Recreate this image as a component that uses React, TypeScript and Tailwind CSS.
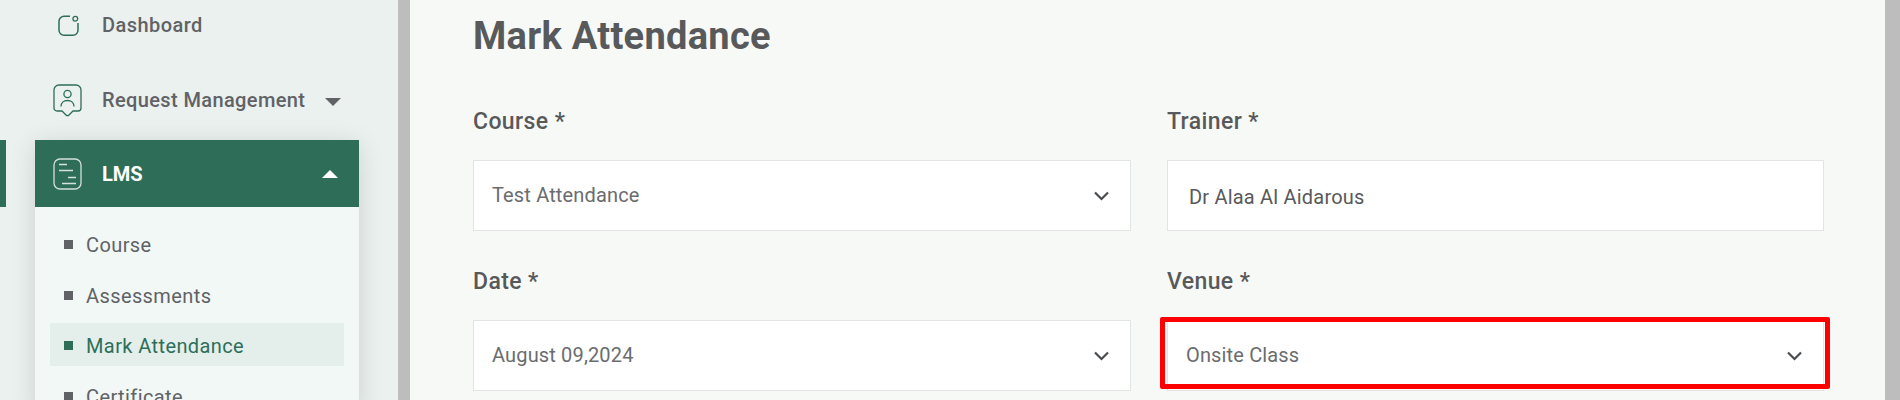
import React from "react";

const font = { fontFamily: "Roboto, sans-serif" };

function Chevron() {
  return (
    <svg width="15" height="10" viewBox="0 0 15 10" fill="none" className="shrink-0">
      <path d="M1 1.500 L7.500 8 L14 1.500" stroke="#4a4d4f" strokeWidth="2.200" />
    </svg>
  );
}

function Field({ label, children, className }: { label: string; children: React.ReactNode; className?: string }) {
  return (
    <div className={className}>
      <div className="h-[42px] mb-[18px] text-[23px] leading-[44px] font-medium text-[#58595b] tracking-[0.4px]">{label}</div>
      {children}
    </div>
  );
}

function SelectBox({ value }: { value: string }) {
  return (
    <div className="h-[71px] bg-white border border-[#e3e5e4] flex items-center justify-between pl-[18px] pr-[21px]">
      <span className="text-[20px] text-[#6a6c6e] tracking-[0.15px] pb-[2px]">{value}</span>
      <Chevron />
    </div>
  );
}

function SubItem({ label, active }: { label: string; active?: boolean }) {
  return (
    <div className={`flex items-center h-[43px] mx-[15px] pl-[14px] ${active ? "bg-[#e4eeea] pt-[2px]" : ""}`}>
      <span className={`w-[9px] h-[9px] mr-[13px] ${active ? "bg-[#2e6e59]" : "bg-[#616265]"}`} />
      <span className={`text-[20px] tracking-[0.4px] ${active ? "text-[#2e6e59]" : "text-[#616265]"}`}>{label}</span>
    </div>
  );
}

export default function App() {
  return (
    <div className="flex h-[400px] w-[1900px] overflow-hidden bg-[#f7f9f7]" style={font}>
      <aside className="w-[398px] shrink-0 bg-[#ebf1ef] flex flex-col">
        <div className="flex items-center h-[50px] shrink-0 pl-[58px]">
          <svg width="21" height="21" viewBox="0 0 21 21" fill="none" className="mr-[23px] shrink-0">
            <path d="M12 1.200H6a5 5 0 0 0-5 5v9a5 5 0 0 0 5 5h9a5 5 0 0 0 5-5V8" stroke="#2e6e59" strokeWidth="1.500" />
            <circle cx="17.300" cy="3.700" r="2.400" stroke="#2e6e59" strokeWidth="1.300" />
          </svg>
          <span className="text-[20px] font-medium text-[#616265] tracking-[0.45px]">Dashboard</span>
        </div>
        <div className="flex items-center h-[90px] shrink-0 pt-[10px] pl-[53px]">
          <svg width="29" height="33" viewBox="0 0 29 33" fill="none" className="mr-[20px] shrink-0">
            <path d="M6 1h17a5 5 0 0 1 5 5v18a3 3 0 0 1-3 3h-5l-4 4a2 2 0 0 1-3 0l-4-4H4a3 3 0 0 1-3-3V6a5 5 0 0 1 5-5Z" stroke="#2e6e59" strokeWidth="1.300" />
            <circle cx="14.500" cy="10" r="3.600" stroke="#2e6e59" strokeWidth="1.300" />
            <path d="M8 22.500c0-3.500 2.500-6 6.500-6s6.500 2.500 6.500 6" stroke="#2e6e59" strokeWidth="1.300" />
          </svg>
          <span className="text-[20px] font-medium text-[#616265] tracking-[0.38px]">Request Management</span>
          <span className="ml-[20px] mt-[3px] w-0 h-0 border-l-[8px] border-r-[8px] border-t-[8px] border-l-transparent border-r-transparent border-t-[#616265]" />
        </div>
        <div className="flex items-stretch shrink-0">
          <div className="w-[6px] h-[67px] bg-[#2e6e59] shrink-0" />
          <div className="w-[324px] ml-[29px] shadow-[0_4px_24px_rgba(0,0,0,0.13)] bg-[#f2f8f6]">
            <div className="h-[67px] bg-[#2e6e59] flex items-center pl-[18px] pr-[21px]">
              <svg width="29" height="32" viewBox="0 0 29 32" fill="none" className="mr-[20px] shrink-0">
                <rect x="1" y="1" width="27" height="30" rx="6" stroke="#d4e0dc" strokeWidth="1.300" />
                <path d="M6 6.500h8M6 12.500h14M15 19.500h8M9 25.500h14" stroke="#d4e0dc" strokeWidth="1.300" />
              </svg>
              <span className="flex-1 text-[20px] font-bold text-white">LMS</span>
              <span className="w-0 h-0 border-l-[8px] border-r-[8px] border-b-[8px] border-l-transparent border-r-transparent border-b-white" />
            </div>
            <div className="pt-[16px] flex flex-col">
              <SubItem label="Course" />
              <div className="h-[8px]" />
              <SubItem label="Assessments" />
              <div className="h-[6px]" />
              <SubItem label="Mark Attendance" active />
              <div className="h-[9px]" />
              <SubItem label="Certificate" />
            </div>
          </div>
        </div>
      </aside>
      <div className="w-[12px] shrink-0 bg-[#bdbdbd]" />
      <main className="w-[1475px] shrink-0 pl-[63px] pr-[61px] min-w-0">
        <h1 className="h-[100px] pt-[13px] text-[38px] leading-[46px] font-bold text-[#58595b] tracking-[0.3px]">Mark Attendance</h1>
        <div className="grid grid-cols-[658px_657px] gap-x-[36px]">
          <Field label="Course *" className="pb-[29px]"><SelectBox value="Test Attendance" /></Field>
          <Field label="Trainer *" className="pb-[29px]">
            <div className="h-[71px] bg-white border border-[#e3e5e4] flex items-center pl-[21px] pt-[3px]">
              <span className="text-[20px] text-[#58595b] tracking-[0.2px]">Dr Alaa Al Aidarous</span>
            </div>
          </Field>
          <Field label="Date *"><SelectBox value="August 09,2024" /></Field>
          <Field label="Venue *">
            <div className="relative">
              <SelectBox value="Onsite Class" />
              <div className="absolute -left-[7px] -right-[6px] -top-[3px] bottom-[2px] border-[5px] border-[#ff0000] rounded-[2px]" />
            </div>
          </Field>
        </div>
      </main>
      <div className="flex-1 bg-[#bdbdbd]" />
    </div>
  );
}
